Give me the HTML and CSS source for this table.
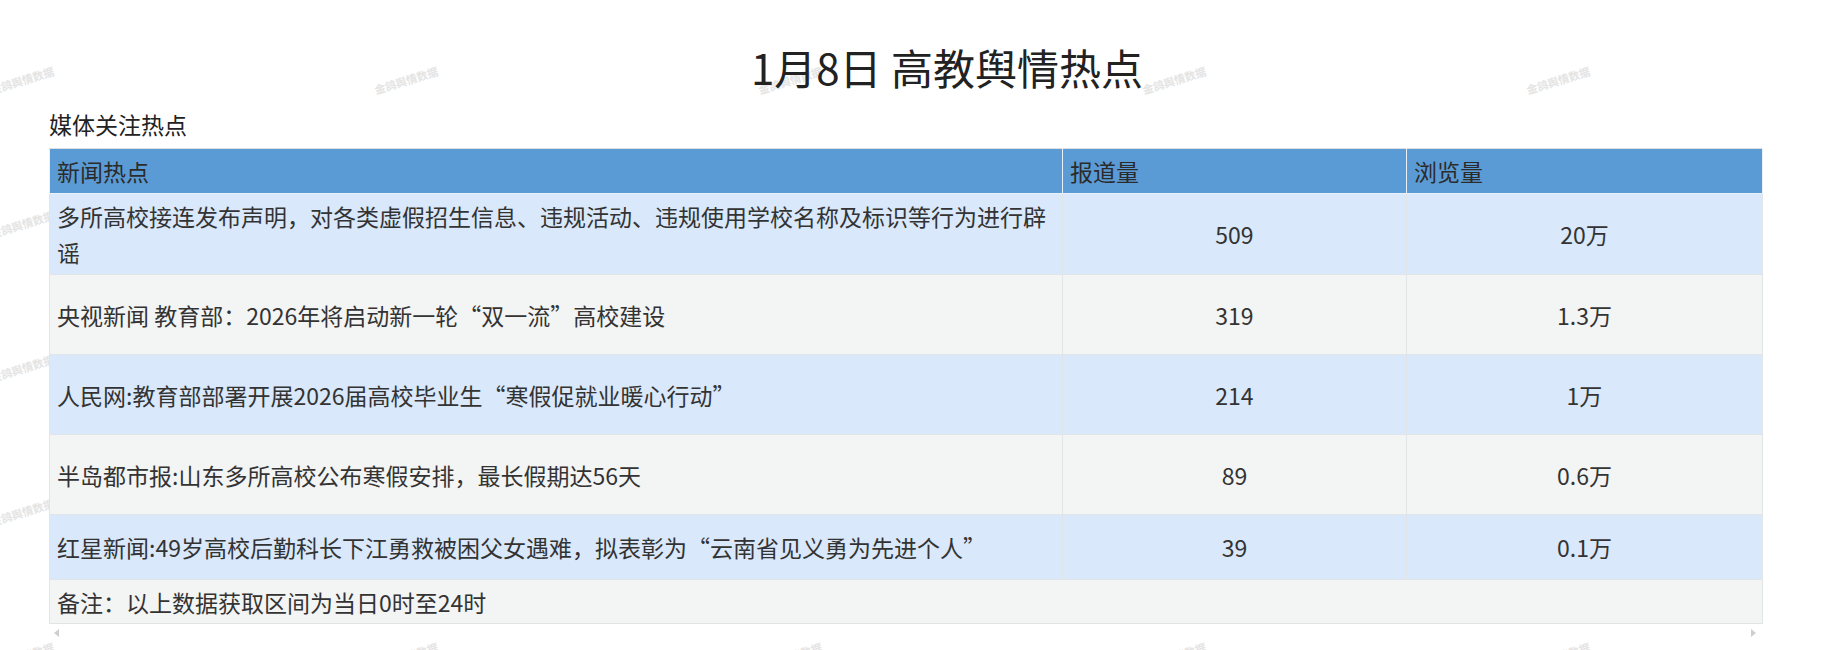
FILE: index.html
```html
<!DOCTYPE html>
<html lang="zh-CN">
<head>
<meta charset="utf-8">
<title>1月8日 高教舆情热点</title>
<link rel="stylesheet" href="styles.css">
</head>
<body>
<div class="page">
  <div class="watermarks" aria-hidden="true">
    <div class="wm"><span>金鸽舆情数据</span></div><div class="wm"><span>金鸽舆情数据</span></div><div class="wm"><span>金鸽舆情数据</span></div><div class="wm"><span>金鸽舆情数据</span></div><div class="wm"><span>金鸽舆情数据</span></div><div class="wm"><span>金鸽舆情数据</span></div>
    <div class="wm"><span>金鸽舆情数据</span></div><div class="wm"><span>金鸽舆情数据</span></div><div class="wm"><span>金鸽舆情数据</span></div><div class="wm"><span>金鸽舆情数据</span></div><div class="wm"><span>金鸽舆情数据</span></div><div class="wm"><span>金鸽舆情数据</span></div>
    <div class="wm"><span>金鸽舆情数据</span></div><div class="wm"><span>金鸽舆情数据</span></div><div class="wm"><span>金鸽舆情数据</span></div><div class="wm"><span>金鸽舆情数据</span></div><div class="wm"><span>金鸽舆情数据</span></div><div class="wm"><span>金鸽舆情数据</span></div>
    <div class="wm"><span>金鸽舆情数据</span></div><div class="wm"><span>金鸽舆情数据</span></div><div class="wm"><span>金鸽舆情数据</span></div><div class="wm"><span>金鸽舆情数据</span></div><div class="wm"><span>金鸽舆情数据</span></div><div class="wm"><span>金鸽舆情数据</span></div>
    <div class="wm"><span>金鸽舆情数据</span></div><div class="wm"><span>金鸽舆情数据</span></div><div class="wm"><span>金鸽舆情数据</span></div><div class="wm"><span>金鸽舆情数据</span></div><div class="wm"><span>金鸽舆情数据</span></div><div class="wm"><span>金鸽舆情数据</span></div>
  </div>
  <div class="content">
    <h1 class="title">1月8日 高教舆情热点</h1>
    <div class="section">
      <div class="subtitle">媒体关注热点</div>
      <table class="hot">
        <colgroup>
          <col class="c-news">
          <col class="c-report">
          <col class="c-view">
        </colgroup>
        <thead>
          <tr class="head">
            <th>新闻热点</th>
            <th>报道量</th>
            <th>浏览量</th>
          </tr>
        </thead>
        <tbody>
          <tr class="blue r81">
            <td class="news">多所高校接连发布声明，对各类虚假招生信息、违规活动、违规使用学校名称及标识等行为进行辟谣</td>
            <td class="num">509</td>
            <td class="num">20万</td>
          </tr>
          <tr class="grey r80">
            <td class="news">央视新闻 教育部：2026年将启动新一轮“双一流”高校建设</td>
            <td class="num">319</td>
            <td class="num">1.3万</td>
          </tr>
          <tr class="blue r80">
            <td class="news">人民网:教育部部署开展2026届高校毕业生“寒假促就业暖心行动”</td>
            <td class="num">214</td>
            <td class="num">1万</td>
          </tr>
          <tr class="grey r80">
            <td class="news">半岛都市报:山东多所高校公布寒假安排，最长假期达56天</td>
            <td class="num">89</td>
            <td class="num">0.6万</td>
          </tr>
          <tr class="blue r65">
            <td class="news">红星新闻:49岁高校后勤科长下江勇救被困父女遇难，拟表彰为“云南省见义勇为先进个人”</td>
            <td class="num">39</td>
            <td class="num">0.1万</td>
          </tr>
          <tr class="grey r44">
            <td colspan="3">备注：以上数据获取区间为当日0时至24时</td>
          </tr>
        </tbody>
      </table>
      <div class="scrollbar">
        <span class="arrow arrow-left"></span>
        <span class="arrow arrow-right"></span>
      </div>
    </div>
  </div>
</div>
</body>
</html>
```
FILE: styles.css
```css
html, body {
  margin: 0;
  padding: 0;
  background: #ffffff;
}

body {
  font-family: "Noto Sans CJK SC", "Noto Sans", sans-serif;
  color: #333333;
}

.page {
  position: relative;
  height: 650px;
  overflow: hidden;
}

.watermarks {
  position: absolute;
  left: -170px;
  top: 8px;
  display: grid;
  grid-template-columns: repeat(6, 384px);
  grid-auto-rows: 144px;
  z-index: 0;
  pointer-events: none;
}

.wm {
  display: flex;
  align-items: center;
  justify-content: center;
}

.wm span {
  font-size: 11px;
  font-weight: bold;
  color: #e4e4e4;
  white-space: nowrap;
  transform: rotate(-17deg);
}

.content {
  position: relative;
  z-index: 1;
  padding-top: 37px;
}

.title {
  margin: 0 0 12px;
  padding-left: 58px;
  text-align: center;
  font-size: 42px;
  line-height: 60px;
  font-weight: normal;
  color: #222222;
}

.section {
  padding-left: 49px;
}

.subtitle {
  font-size: 23px;
  line-height: 30px;
  margin-bottom: 9px;
  color: #222222;
}

.hot {
  border-collapse: collapse;
  table-layout: fixed;
  width: 1713px;
  font-size: 23px;
  line-height: 36px;
  border: 1px solid #dcdfe2;
}

.c-news { width: 1013px; }
.c-report { width: 344px; }
.c-view { width: 356px; }

.hot th,
.hot td {
  border: 1px solid #e2e5e8;
  padding: 0 7px;
  vertical-align: middle;
}

.hot td.news {
  padding-right: 4px;
}

.hot th {
  background: #5b9bd5;
  border-color: #eaf1f8;
  border-top-color: #dcdfe2;
  text-align: left;
  font-weight: normal;
  color: #2b2b2b;
}

.head { height: 45px; }
.r81 { height: 81px; }
.r80 { height: 80px; }
.r65 { height: 65px; }
.r44 { height: 44px; }

.blue td { background: #d9e8fa; }
.grey td { background: #f3f4f4; }

.hot td.num {
  text-align: center;
}

.scrollbar {
  box-sizing: border-box;
  width: 1713px;
  display: flex;
  justify-content: space-between;
  align-items: center;
  padding: 0 6px 0 5px;
  margin-top: 4px;
  height: 9px;
}

.arrow {
  width: 0;
  height: 0;
  border-top: 4.5px solid transparent;
  border-bottom: 4.5px solid transparent;
}

.arrow-left {
  border-right: 5px solid #cfcfcf;
}

.arrow-right {
  border-left: 5px solid #cfcfcf;
}
```
